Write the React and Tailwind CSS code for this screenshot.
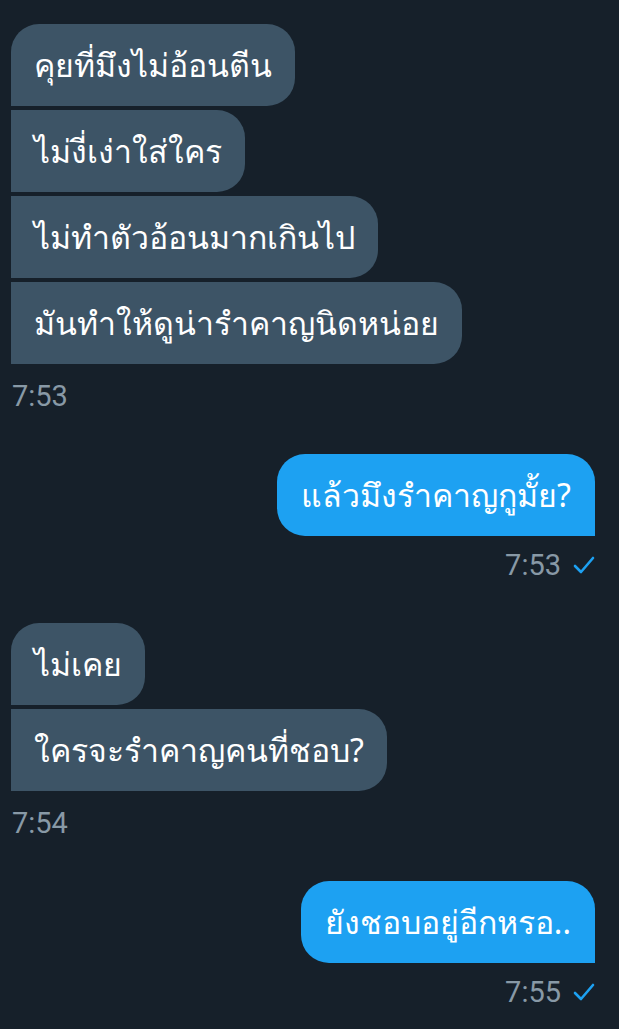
const received1 = [
  'คุยที่มึงไม่อ้อนตีน',
  'ไม่งี่เง่าใส่ใคร',
  'ไม่ทำตัวอ้อนมากเกินไป',
  'มันทำให้ดูน่ารำคาญนิดหน่อย',
];

const received2 = ['ไม่เคย', 'ใครจะรำคาญคนที่ชอบ?'];

const Check = () => (
  <svg width="22" height="20" viewBox="0 0 22 20" fill="none" className="ml-3">
    <path d="M2 11l6 6L20 3" stroke="#1da1f2" strokeWidth="2.6" strokeLinecap="round" strokeLinejoin="round" />
  </svg>
);

const Received = ({ lines, time }) => (
  <div className="flex flex-col items-start gap-[4px]">
    {lines.map((t, i) => (
      <div
        key={i}
        className={`bg-[#3d5466] text-white text-[32px] leading-[82px] h-[82px] px-[23px] whitespace-nowrap rounded-r-[28px] ${i === 0 ? 'rounded-tl-[28px]' : ''}`}
      >
        {t}
      </div>
    ))}
    <div className="mt-[13px] text-[#8899a6] text-[29px] leading-[30px] pl-[1px]" style={{ fontFamily: 'Roboto, sans-serif' }}>
      {time}
    </div>
  </div>
);

const Sent = ({ text, time }) => (
  <div className="flex flex-col items-end">
    <div className="bg-[#1da1f2] text-white text-[32px] leading-[82px] h-[82px] px-[24px] whitespace-nowrap rounded-t-[28px] rounded-bl-[28px]">
      {text}
    </div>
    <div className="mt-[14px] flex items-center text-[#8899a6] text-[29px] leading-[30px]" style={{ fontFamily: 'Roboto, sans-serif' }}>
      {time}
      <Check />
    </div>
  </div>
);

export default function App() {
  return (
    <div
      className="w-[619px] h-[1029px] bg-[#16202a] pl-[11px] pr-[24px] pt-[24px] overflow-hidden flex flex-col"
      style={{ fontFamily: '"Noto Sans", "DejaVu Sans", sans-serif' }}
    >
      <Received lines={received1} time="7:53" />
      <div className="mt-[43px]">
        <Sent text="แล้วมึงรำคาญกูมั้ย?" time="7:53" />
      </div>
      <div className="mt-[43px]">
        <Received lines={received2} time="7:54" />
      </div>
      <div className="mt-[43px]">
        <Sent text="ยังชอบอยู่อีกหรอ.." time="7:55" />
      </div>
    </div>
  );
}
